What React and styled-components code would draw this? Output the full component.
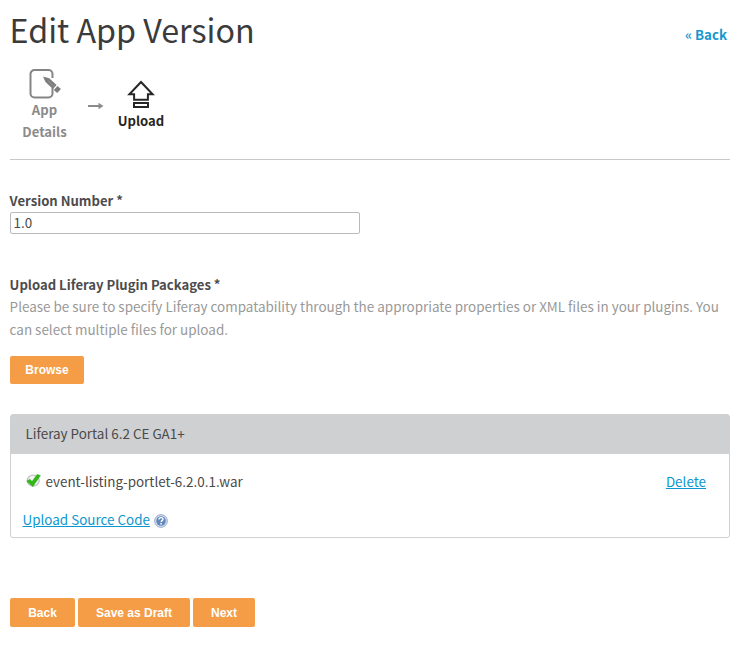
import React from "react";
import styled, { createGlobalStyle } from "styled-components";

const Global = createGlobalStyle`
  *, *::before, *::after { box-sizing: border-box; }
  body {
    margin: 0;
    background: #fff;
    color: #4a4a4a;
    font: 13.45px/22px "Noto Sans CJK SC", "Open Sans", sans-serif;
  }
`;

const Page = styled.main`
  width: 720px;
  margin-left: 10px;
  display: flex;
  flex-direction: column;
`;

const Header = styled.header`
  height: 62px;
  display: flex;
  justify-content: space-between;
`;

const Title = styled.h1`
  margin: 0 0 0 -0.5px;
  font-size: 32.25px;
  line-height: 58px;
  font-weight: 400;
  color: #3b3b3b;
`;

const BackLink = styled.a`
  margin: 24px 3px 0 0;
  font-weight: 700;
  color: #1798cc;
  font-size: 13.3px;
  line-height: 22px;
`;

const Steps = styled.nav`
  height: 98px;
  display: flex;
  align-items: flex-start;
  border-bottom: 1px solid #c8c8c8;
`;

const Step = styled.div`
  display: flex;
  flex-direction: column;
  align-items: center;
  width: ${(p) => p.$width};
  margin-top: ${(p) => p.$top};
  color: ${(p) => (p.$active ? "#262626" : "#8b8b8b")};
  font-size: 13.1px;
  font-weight: 700;
  line-height: 22px;
  text-align: center;
  svg { display: block; }
`;

const StepArrow = styled.svg`
  margin: 39px 14px 0 8px;
  display: block;
`;

const Field = styled.section`
  display: flex;
  flex-direction: column;
  margin-top: ${(p) => p.$top};
`;

const Label = styled.label`
  margin-left: -0.4px;
  font-size: 13.1px;
  font-weight: 700;
  line-height: 22px;
  color: #4c4c4e;
`;

const TextInput = styled.input`
  width: 350px;
  height: 22px;
  padding: 0 2.5px 3px;
  border: 1px solid #b8babd;
  border-radius: 2px;
  background: #fff;
  color: #4a4a4a;
  font: 13.45px/17px "Noto Sans CJK SC", "Open Sans", sans-serif;
  outline: none;
`;

const Hint = styled.p`
  margin: -1px 0 15px -0.4px;
  font-size: 13.46px;
  line-height: 23px;
  color: #999;
`;

const Button = styled.button`
  width: ${(p) => p.$width};
  height: ${(p) => p.$height || "29px"};
  padding: 0;
  border: 0;
  border-radius: 2px;
  background: #f59c46;
  color: #fff;
  font: bold 12px/16px "Liberation Sans", Arial, sans-serif;
`;

const Panel = styled.section`
  height: 124px;
  margin-top: 30px;
  border: 1px solid #cfd0d2;
  border-radius: 3px;
`;

const PanelHeader = styled.div`
  height: 39px;
  padding-left: 14.5px;
  line-height: 37px;
  background: #cfd0d2;
`;

const FileRow = styled.div`
  display: flex;
  align-items: center;
  height: 22px;
  margin: 16px 23px 0 15px;
`;

const FileName = styled.span`
  flex: 1;
  margin-left: 4.5px;
`;

const SourceRow = styled.div`
  display: flex;
  align-items: center;
  gap: 4px;
  height: 22px;
  margin: 16px 0 0 11.5px;
  svg { margin-top: 3px; }
`;

const Link = styled.a`
  color: #0c97cf;
  text-decoration: underline;
  text-underline-offset: 1px;
  text-decoration-thickness: 1px;
`;

const Actions = styled.footer`
  display: flex;
  gap: 3px;
  margin-top: 60px;
`;

const DetailsIcon = () => (
  <svg width="35" height="31" viewBox="0 0 35 31" fill="none">
    <path d="M25.5 10V6a4 4 0 0 0-4-4h-14a4 4 0 0 0-4 4v19.5a4 4 0 0 0 4 4h14a4 4 0 0 0 4-4V20" stroke="#858585" strokeWidth="2" />
    <path d="M16 8.5l6.2 1.7 7.4 6.9-3.7 3.9-7.4-7z" fill="#7d7d7d" />
    <path d="M30.5 18l3.4 3.1-3.7 4-3.4-3.2z" fill="#7d7d7d" />
    <path d="M20.8 12.5l6.2 6" stroke="#a9a9a9" strokeWidth=".6" />
  </svg>
);

const UploadIcon = () => (
  <svg width="28" height="31" viewBox="0 0 28 31" fill="none" stroke="#262626" strokeWidth="2">
    <path d="M14 3L25.6 15.2H20.9v5.6H7.1v-5.6H2.4z" />
    <path d="M7 24h14v4H7z" />
  </svg>
);

const CheckIcon = () => (
  <svg width="15" height="16" viewBox="0 0 15 16" fill="none">
    <ellipse cx="7.2" cy="7.6" rx="6" ry="5.4" fill="#f3f3f3" stroke="#c3c3c3" strokeWidth="1.3" />
    <path d="M.8 8.2l3-2 2.3 2.3L11.2 1.4l3.2 1.2-7.6 11z" fill="#2dbb13" stroke="#249f10" strokeWidth=".5" />
  </svg>
);

const HelpIcon = () => (
  <svg width="14" height="14" viewBox="0 0 14 14" fill="none">
    <circle cx="7" cy="7" r="6.3" fill="#dce5f2" stroke="#8fa6c8" />
    <circle cx="7" cy="7" r="4.8" fill="#6287bd" />
    <path d="M5 5.4C5 4.2 5.8 3.6 7 3.6s2 .7 2 1.7C9 6.6 7.1 6.7 7.1 8" stroke="#fff" strokeWidth="1.4" />
    <path d="M6.3 9.1h1.5v1.5H6.3z" fill="#fff" />
  </svg>
);

export default function App() {
  return (
    <>
      <Global />
      <Page>
        <Header>
          <Title>Edit App Version</Title>
          <BackLink>« Back</BackLink>
        </Header>
        <Steps>
          <Step $width="69px" $top="6px">
            <DetailsIcon />
            <span>App<br />Details</span>
          </Step>
          <StepArrow width="17" height="10" viewBox="0 0 17 10" fill="none">
            <path d="M1 5h14" stroke="#8b8b8b" strokeWidth="2" />
            <path d="M11.5 1.8L16.5 5l-5 3.2z" fill="#8b8b8b" />
          </StepArrow>
          <Step $width="46px" $top="17px" $active>
            <UploadIcon />
            <span>Upload</span>
          </Step>
        </Steps>
        <Field $top="30px">
          <Label htmlFor="version">Version Number *</Label>
          <TextInput id="version" defaultValue="1.0" />
        </Field>
        <Field $top="40px">
          <Label as="div">Upload Liferay Plugin Packages *</Label>
          <Hint>
            Please be sure to specify Liferay compatability through the appropriate properties or XML files in your plugins. You can select multiple files for upload.
          </Hint>
          <Button $width="74px" $height="28px">Browse</Button>
        </Field>
        <Panel>
          <PanelHeader>Liferay Portal 6.2 CE GA1+</PanelHeader>
          <FileRow>
            <CheckIcon />
            <FileName>event-listing-portlet-6.2.0.1.war</FileName>
            <Link>Delete</Link>
          </FileRow>
          <SourceRow>
            <Link>Upload Source Code</Link>
            <HelpIcon />
          </SourceRow>
        </Panel>
        <Actions>
          <Button $width="65px">Back</Button>
          <Button $width="112px">Save as Draft</Button>
          <Button $width="62px">Next</Button>
        </Actions>
      </Page>
    </>
  );
}
